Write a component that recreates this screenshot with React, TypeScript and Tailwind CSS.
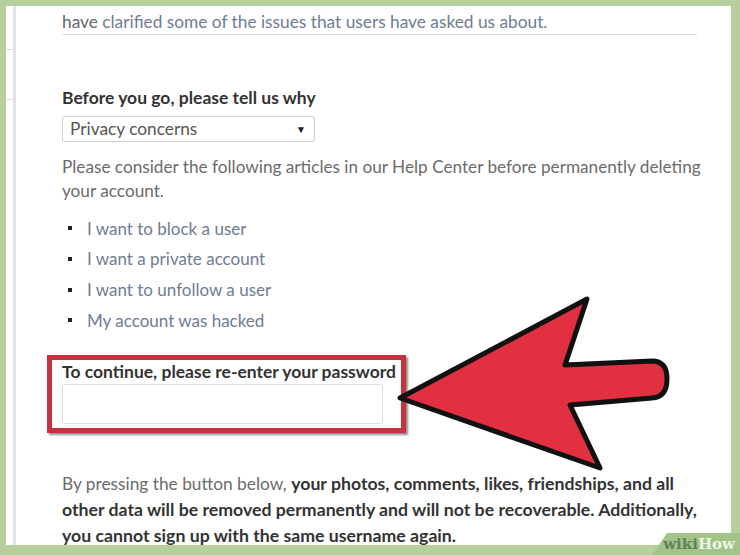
import React from "react";

const font = { fontFamily: "Lato, 'Open Sans', Arial, sans-serif" };

const HelpLinks = [
  "I want to block a user",
  "I want a private account",
  "I want to unfollow a user",
  "My account was hacked",
];

const Arrow = () => (
  <svg
    className="absolute left-0 top-0 pointer-events-none"
    width="740"
    height="555"
    viewBox="0 0 740 555"
  >
    <path
      d="M400 398 L587 299 L565 365 L652 361 Q667 361 667 379 Q667 397 652 398 L570 405 L600 468 Z"
      fill="#e1303f"
      stroke="#111"
      strokeWidth="5"
      strokeLinejoin="round"
    />
  </svg>
);

export default function App() {
  return (
    <div
      className="relative w-[740px] h-[555px] overflow-hidden bg-[#b7cf9d] pt-[6px] pl-[6px] pr-[9px] pb-[10px]"
      style={font}
    >
      <div className="flex h-full bg-white">
        {/* left sidebar remnant */}
        <div className="w-[7px] flex flex-col">
          <div className="h-[43px]" />
          <div className="h-px bg-[#d9dbe0]" />
          <div className="h-[49px]" />
          <div className="h-px bg-[#d9dbe0]" />
        </div>
        <div className="w-[3px] bg-[#e1e3ec]" />

        <div className="flex-1 pl-[46px] pr-[20px] overflow-hidden">
          {/* previous line, scrolled off: only descenders show */}
          <div className="h-[4px] overflow-hidden">
            <div className="-mt-[22px] text-[17.3px] leading-[24px] text-[#6b6b6b] whitespace-nowrap">
              If you're having problems, please try our Help Center, where we
            </div>
          </div>
          <div className="text-[17.3px] leading-[24px] text-[#666] whitespace-nowrap">
            have <span className="text-[#6f7c94]">clarified some of the issues that users have asked us about.</span>
          </div>
          <div className="h-px bg-[#dcdcdc] w-[635px]" />

          <div className="mt-[51px] text-[17.5px] leading-[24px] font-bold text-[#333]">
            Before you go, please tell us why
          </div>
          <div className="mt-[6px] w-[253px] h-[26px] border border-[#cfcfcf] rounded-[3px] flex items-center justify-between pl-[7px] pr-[8px] text-[17.3px] text-[#555]">
            <span>Privacy concerns</span>
            <span className="text-[10px] text-[#222]">▼</span>
          </div>

          <div className="mt-[13px] text-[17.2px] leading-[24px] text-[#6b6b6b] whitespace-nowrap">
            Please consider the following articles in our Help Center before permanently deleting
            <br />
            your account.
          </div>

          <ul className="mt-[10px] flex flex-col">
            {HelpLinks.map((item, index) => (
              <li key={index} className="flex items-center h-[30.67px] text-[17px] text-[#6f7c94]">
                <span className="w-[4px] h-[4px] bg-[#222] ml-[6px] mr-[15px]" />
                {item}
              </li>
            ))}
          </ul>

          <div className="mt-[19px] -ml-[15px] w-[359px] h-[78px] border-[5px] border-[#c8323f] shadow-[2px_2px_2px_rgba(0,0,0,0.45)] pl-[10px] pt-[2px]">
            <div className="text-[17.5px] leading-[20px] font-bold text-[#333] whitespace-nowrap">
              To continue, please re-enter your password
            </div>
            <div className="mt-[2px] w-[321px] h-[40px] border border-[#dedede] rounded-[3px]" />
          </div>

          <p className="mt-[38px] text-[17.3px] leading-[26px] text-[#6b6b6b] whitespace-nowrap">
            By pressing the button below,{" "}
            <span className="font-bold text-[17.7px] text-[#333]">
              your photos, comments, likes, friendships, and all
              <br />
              other data will be removed permanently and will not be recoverable. Additionally,
              <br />
              you cannot sign up with the same username again.
            </span>
          </p>
        </div>
      </div>

      <Arrow />

      <div className="absolute right-0 bottom-0 w-[88px] h-[22px] bg-[#a3c488] [clip-path:polygon(15px_0,100%_0,100%_100%,0_100%)] flex items-center justify-end pr-[5px]">
        <span
          className="text-[15px] font-bold leading-none"
          style={{ fontFamily: "'DejaVu Serif', 'Liberation Serif', serif" }}
        >
          <span className="text-[#63805a]">wiki</span>
          <span className="text-[#eef5e6]">How</span>
        </span>
      </div>
    </div>
  );
}
